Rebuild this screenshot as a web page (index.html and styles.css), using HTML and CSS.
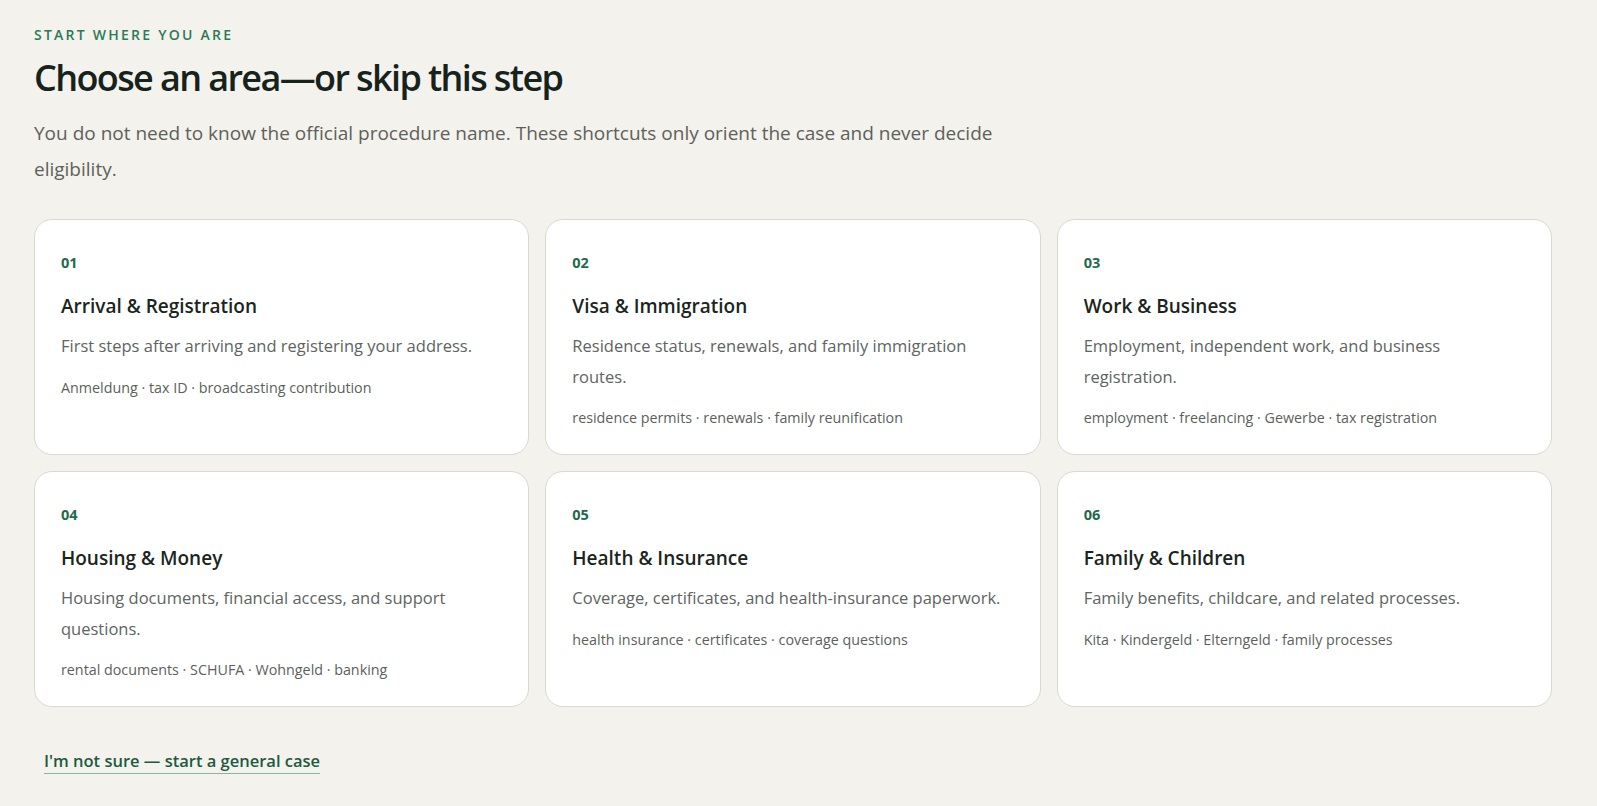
FILE: index.html
```html
<!DOCTYPE html>
<html lang="en">
<head>
<meta charset="UTF-8">
<title>Choose an area</title>
<link rel="stylesheet" href="styles.css">
</head>
<body>
<div class="page">
  <p class="eyebrow">START WHERE YOU ARE</p>
  <h1>Choose an area—or skip this step</h1>
  <p class="lead">You do not need to know the official procedure name. These shortcuts only orient the case and never decide eligibility.</p>

  <div class="areas">
    <a class="card" href="#">
      <span class="num">01</span>
      <span class="title">Arrival &amp; Registration</span>
      <span class="desc">First steps after arriving and registering your address.</span>
      <span class="tags">Anmeldung · tax ID · broadcasting contribution</span>
    </a>
    <a class="card" href="#">
      <span class="num">02</span>
      <span class="title">Visa &amp; Immigration</span>
      <span class="desc">Residence status, renewals, and family immigration routes.</span>
      <span class="tags">residence permits · renewals · family reunification</span>
    </a>
    <a class="card" href="#">
      <span class="num">03</span>
      <span class="title">Work &amp; Business</span>
      <span class="desc">Employment, independent work, and business registration.</span>
      <span class="tags">employment · freelancing · Gewerbe · tax registration</span>
    </a>
    <a class="card" href="#">
      <span class="num">04</span>
      <span class="title">Housing &amp; Money</span>
      <span class="desc">Housing documents, financial access, and support questions.</span>
      <span class="tags">rental documents · SCHUFA · Wohngeld · banking</span>
    </a>
    <a class="card" href="#">
      <span class="num">05</span>
      <span class="title">Health &amp; Insurance</span>
      <span class="desc">Coverage, certificates, and health-insurance paperwork.</span>
      <span class="tags">health insurance · certificates · coverage questions</span>
    </a>
    <a class="card" href="#">
      <span class="num">06</span>
      <span class="title">Family &amp; Children</span>
      <span class="desc">Family benefits, childcare, and related processes.</span>
      <span class="tags">Kita · Kindergeld · Elterngeld · family processes</span>
    </a>
  </div>

  <button class="skip" type="button"><span>I'm not sure — start a general case</span></button>
</div>
</body>
</html>
```

FILE: styles.css
```css
body {
    margin: 0;
    background: #f4f2ec;
    font-family: "Open Sans", "Noto Sans", sans-serif;
    color: #17231d;
}

.page {
    width: 1518px;
    padding: 25px 45px 40px 34px;
}

.eyebrow {
    margin: 0;
    font-size: 14px;
    font-weight: 600;
    line-height: 20px;
    letter-spacing: 0.16em;
    color: #2b7a58;
}

h1 {
    margin: 9px 0 0;
    font-size: 36px;
    font-weight: 600;
    line-height: 48px;
    letter-spacing: -0.045em;
    color: #16231c;
}

.lead {
    margin: 14px 0 0;
    max-width: 990px;
    font-size: 19px;
    line-height: 35.5px;
    color: #5d615c;
}

.areas {
    display: grid;
    grid-template-columns: repeat(3, 1fr);
    gap: 16px;
    margin-top: 32px;
}

.card {
    display: flex;
    flex-direction: column;
    padding: 33px 26px 26px;
    background: #fff;
    border: 1px solid #dbd8d1;
    border-radius: 18px;
    text-decoration: none;
}

.num {
    font-size: 14.5px;
    font-weight: 700;
    line-height: 20px;
    color: #1f6b4c;
}

.title {
    margin-top: 21px;
    font-size: 19px;
    font-weight: 600;
    line-height: 25px;
    color: #1b2520;
}

.desc {
    margin-top: 12px;
    font-size: 16.5px;
    line-height: 30.5px;
    color: #60645f;
}

.tags {
    margin-top: 15px;
    font-size: 14.3px;
    line-height: 21px;
    color: #5c5f5b;
}

.skip {
    margin-top: 35px;
    padding: 8px 10px;
    background: none;
    border: 0;
    font-family: inherit;
    font-size: 16.5px;
    font-weight: 600;
    line-height: 22px;
    color: #1e5a43;
    cursor: pointer;
}

.skip span {
    border-bottom: 1px solid #8fb3a2;
    padding-bottom: 1px;
}
```
